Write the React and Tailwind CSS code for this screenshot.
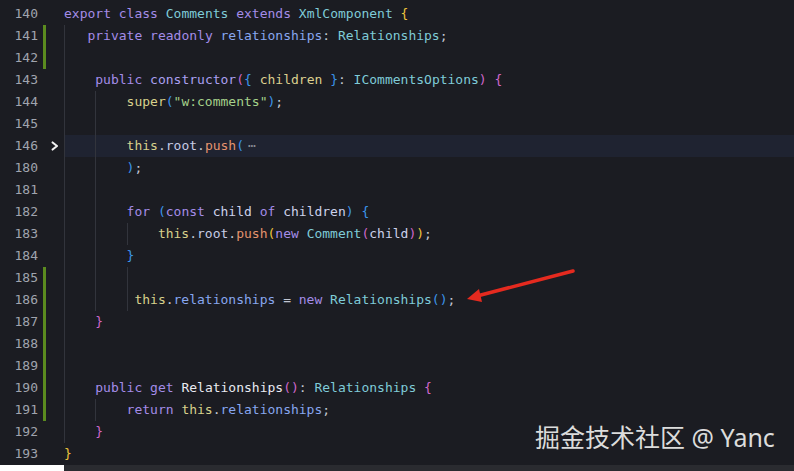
import React from 'react';

const C = {
  kw: 'text-[#a48ce8]',
  ty: 'text-[#7fcbd8]',
  fn: 'text-[#aba0f2]',
  th: 'text-[#d8d18c]',
  pr: 'text-[#c6cce6]',
  me: 'text-[#e4946e]',
  rel: 'text-[#88a7f0]',
  str: 'text-[#a5d18b]',
  pu: 'text-[#c2c6d2]',
  gold: 'text-[#efc53c]',
  pink: 'text-[#d067cb]',
  blue: 'text-[#3b95ea]',
  vr: 'text-[#cdd2ec]',
  prm: 'text-[#dccf8e]',
  dec: 'text-[#e9ebf2]',
};

const lines = [
  { n: 140, ind: [], code: [['export', C.kw], [' '], ['class', C.kw], [' '], ['Comments', C.ty], [' '], ['extends', C.kw], [' '], ['XmlComponent', C.ty], [' '], ['{', C.gold]] },
  { n: 141, ind: [3], git: true, code: [['private', C.kw], [' '], ['readonly', C.kw], [' '], ['relationships', C.rel], [':', C.pu], [' '], ['Relationships', C.ty], [';', C.pu]] },
  { n: 142, ind: [4], git: true, code: [] },
  { n: 143, ind: [4], code: [['public', C.kw], [' '], ['constructor', C.fn], ['(', C.pink], ['{', C.blue], [' '], ['children', C.prm], [' '], ['}', C.blue], [':', C.pu], [' '], ['ICommentsOptions', C.ty], [')', C.pink], [' '], ['{', C.pink]] },
  { n: 144, ind: [4, 4], code: [['super', C.th], ['(', C.blue], ['"w:comments"', C.str], [')', C.blue], [';', C.pu]] },
  { n: 145, ind: [4, 4], code: [] },
  { n: 146, ind: [4, 4], fold: true, hl: true, code: [['this', C.th], ['.', C.pu], ['root', C.pr], ['.', C.pu], ['push', C.me], ['(', C.blue]] },
  { n: 180, ind: [4, 4], code: [[')', C.blue], [';', C.pu]] },
  { n: 181, ind: [4, 4], code: [] },
  { n: 182, ind: [4, 4], code: [['for', C.kw], [' '], ['(', C.blue], ['const', C.kw], [' '], ['child', C.vr], [' '], ['of', C.kw], [' '], ['children', C.vr], [')', C.blue], [' '], ['{', C.blue]] },
  { n: 183, ind: [4, 4, 4], code: [['this', C.th], ['.', C.pu], ['root', C.pr], ['.', C.pu], ['push', C.me], ['(', C.gold], ['new', C.kw], [' '], ['Comment', C.ty], ['(', C.pink], ['child', C.vr], [')', C.pink], [')', C.gold], [';', C.pu]] },
  { n: 184, ind: [4, 4], code: [['}', C.blue]] },
  { n: 185, ind: [4, 4, 4], git: true, code: [] },
  { n: 186, ind: [4, 4, 1], git: true, code: [['this', C.th], ['.', C.pu], ['relationships', C.rel], [' '], ['=', C.pu], [' '], ['new', C.kw], [' '], ['Relationships', C.ty], ['()', C.blue], [';', C.pu]] },
  { n: 187, ind: [4], git: true, code: [['}', C.pink]] },
  { n: 188, ind: [4], git: true, code: [] },
  { n: 189, ind: [4], git: true, code: [] },
  { n: 190, ind: [4], git: true, code: [['public', C.kw], [' '], ['get', C.kw], [' '], ['Relationships', C.dec], ['()', C.pink], [':', C.pu], [' '], ['Relationships', C.ty], [' '], ['{', C.pink]] },
  { n: 191, ind: [4, 4], git: true, code: [['return', C.kw], [' '], ['this', C.th], ['.', C.pu], ['relationships', C.rel], [';', C.pu]] },
  { n: 192, ind: [4], code: [['}', C.pink]] },
  { n: 193, ind: [], code: [['}', C.gold]] },
];

const indentW = { 1: 'w-[1ch]', 3: 'w-[3ch]', 4: 'w-[4ch]' };

function Row({ line }) {
  return (
    <div className="flex h-[22px]">
      {/* gutter */}
      <div className="flex w-[64px] shrink-0 items-stretch">
        <span className="w-[38px] self-center text-right text-[#a0a4ae]">{line.n}</span>
        <span className={`ml-[5px] w-[3px] ${line.git ? 'bg-[#5b8b1f]' : ''}`}></span>
        <span className="flex w-[18px] items-center justify-center">
          {line.fold && (
            <svg width="8" height="10" viewBox="0 0 8 10">
              <polyline points="1.6,1.4 6,5 1.6,8.6" fill="none" stroke="#f2f2f2" strokeWidth="2" strokeLinecap="round" strokeLinejoin="round" />
            </svg>
          )}
        </span>
      </div>
      {/* code */}
      <div className={`flex flex-1 items-stretch whitespace-pre ${line.hl ? 'bg-[#1f2331]' : ''}`}>
        {line.ind.map((w, i) => (
          <span key={i} className={`shrink-0 border-l border-[#32343c] ${indentW[w]}`}></span>
        ))}
        <span className="self-center">
          {line.code.map(([txt, cls], i) => (
            <span key={i} className={cls || C.pu}>{txt}</span>
          ))}
          {line.fold && <span className="ml-[4px] text-[#878a94]">⋯</span>}
        </span>
      </div>
    </div>
  );
}

export default function App() {
  return (
    <div className="relative h-[471px] w-[794px] overflow-hidden bg-[#1b1c22] font-['DejaVu_Sans_Mono',monospace] text-[13px] leading-[22px]">
      <div className="pt-[3px]">
        {lines.map((l) => (
          <Row key={l.n} line={l} />
        ))}
      </div>
      <div className="flex h-[6px]">
        <div className="w-[64px] bg-white"></div>
        <div className="flex-1 bg-[#2a2b30]"></div>
      </div>

      {/* red annotation arrow */}
      <svg className="pointer-events-none absolute left-0 top-0" width="794" height="471">
        <line x1="573" y1="271" x2="479" y2="295.5" stroke="#e52a1f" strokeWidth="3.5" strokeLinecap="round" />
        <polygon points="467,299 479,289 482,302" fill="#e52a1f" />
      </svg>

      {/* watermark */}
      <div className="absolute left-[535px] top-[422px] font-['Noto_Sans','Noto_Sans_CJK_SC',sans-serif] text-[25px] leading-[30px] text-[#dcdcdc]">
        掘金技术社区 @ Yanc
      </div>
    </div>
  );
}
